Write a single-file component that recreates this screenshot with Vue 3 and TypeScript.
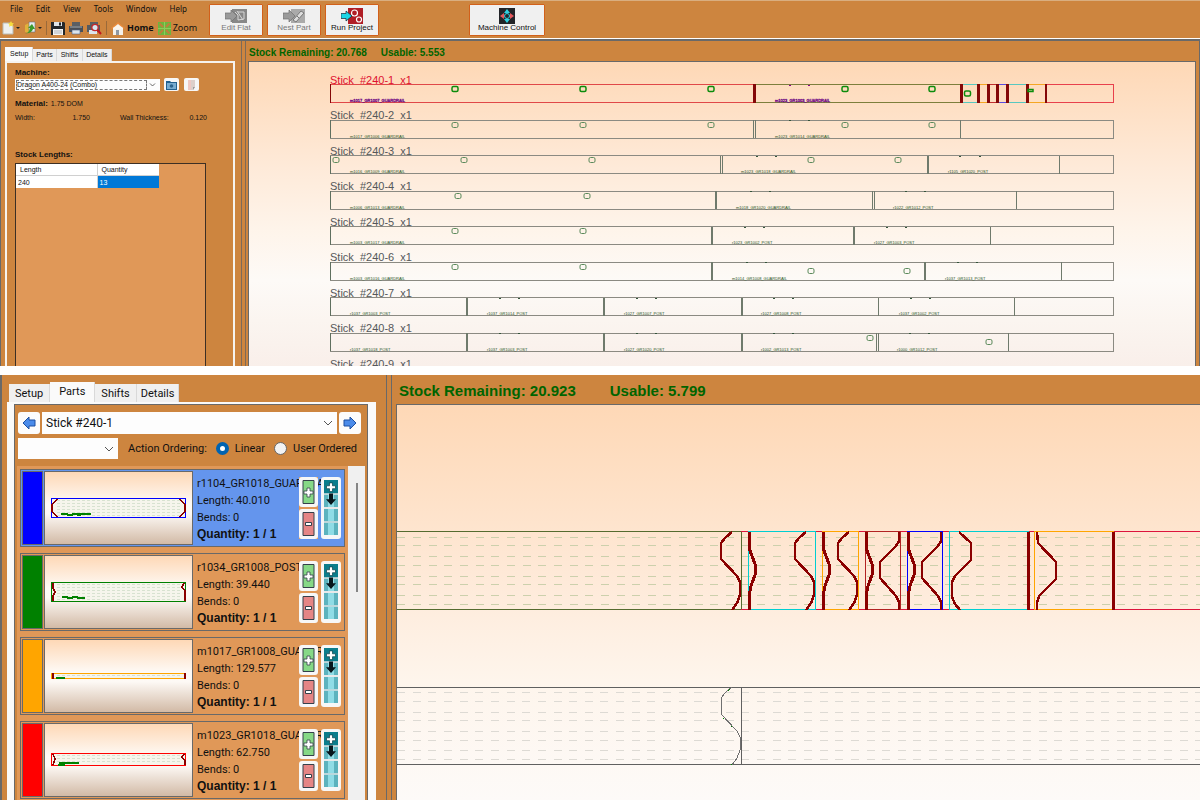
<script setup lang="ts">
import { ref } from 'vue'

interface Row {
  y: number
  seps: number[]
  holes: [number, number][]
  notches: number[]
  labels: [number, string][]
}
interface Part {
  name: string
  length: string
  color: string
  top: number
  height: number
  left: string
  right: string
  mark: string
}

const menus = ['File', 'Edit', 'View', 'Tools', 'Window', 'Help']
const tabs = ['Setup', 'Parts', 'Shifts', 'Details']
const ordering = ref('linear')

const rows: Row[] = [
  { y: 84.5, seps: [], holes: [[455, 89], [583, 89], [711, 89], [845, 89], [932, 89], [967.5, 93.5]], notches: [790, 809], labels: [[350, 'm1017_GR1007_GUARDRAIL'], [775, 'm1023_GR1003_GUARDRAIL']] },
  { y: 120, seps: [753.5, 755, 960.5], holes: [[455, 125], [583, 125], [711, 125], [845, 125], [932, 125]], notches: [790, 809], labels: [[350, 'm1017_GR1006_GUARDRAIL'], [775, 'm1023_GR1014_GUARDRAIL']] },
  { y: 155.5, seps: [720.8, 722, 927.5, 928.5, 1059.5], holes: [[336, 160], [464, 160], [592, 160], [811, 160], [898, 160]], notches: [757, 776, 960, 980], labels: [[350, 'm1016_GR1009_GUARDRAIL'], [741, 'm1023_GR1018_GUARDRAIL'], [948, 'r1105_GR1020_POST']] },
  { y: 191, seps: [715, 716.5, 872.5, 874.5, 1016.5], holes: [[458, 196], [587, 196]], notches: [751, 770, 906, 925], labels: [[350, 'm1006_GR1013_GUARDRAIL'], [736, 'm1018_GR1020_GUARDRAIL'], [893, 'r1022_GR1012_POST']] },
  { y: 226.5, seps: [711, 712, 853, 854.5, 990.5], holes: [[455, 231], [583, 231]], notches: [745, 764, 887, 906], labels: [[350, 'm1003_GR1017_GUARDRAIL'], [732, 'r1023_GR1002_POST'], [874, 'r1027_GR1003_POST']] },
  { y: 262, seps: [711, 712, 924, 925, 1061.5], holes: [[455, 267], [583, 267], [811, 271], [907, 271]], notches: [747, 766, 958, 977], labels: [[350, 'm1003_GR1016_GUARDRAIL'], [732, 'm1014_GR1008_GUARDRAIL'], [945, 'r1037_GR1013_POST']] },
  { y: 297.5, seps: [466.2, 467.5, 603.5, 604.5, 741, 742.5, 878.5, 1014.5], holes: [], notches: [500, 519, 637, 656, 774, 793, 911, 930], labels: [[350, 'r1037_GR1003_POST'], [487, 'r1037_GR1014_POST'], [624, 'r1027_GR1007_POST'], [761, 'r1027_GR1008_POST'], [899, 'r1037_GR1002_POST']] },
  { y: 333, seps: [466.2, 467.5, 603.5, 604.5, 741, 742.5, 876.2, 878.2, 1008.5], holes: [[870, 338], [989, 342]], notches: [500, 519, 637, 656, 774, 793, 910, 929], labels: [[350, 'r1037_GR1018_POST'], [487, 'r1037_GR1003_POST'], [624, 'r1027_GR1020_POST'], [761, 'r1002_GR1013_POST'], [897, 'r1000_GR1012_POST']] },
]

const firstSegs: [number, number, string][] = [
  [330, 754, '#e04848'], [756, 961, '#7d7f3c'], [961, 978, '#58c8c0'], [978, 988, '#f5a623'], [988, 998, '#c03030'],
  [998, 1008, '#5a4be0'], [1008, 1027, '#58c8c0'], [1027, 1046, '#f5a623'], [1046, 1114, '#e8404c'],
]
const firstCuts: [number, number][] = [[330.5, 1], [754.5, 3], [961.5, 3], [978.5, 3], [988.5, 3], [997.5, 3], [1007.5, 3], [1027.5, 3], [1046, 2]]

const zoomSegs: [number, number, string][] = [
  [397, 741, '#556b2f'], [741, 748, '#dc143c'], [748, 816, '#00ced1'], [816, 822, '#dc143c'], [822, 859, '#ffa500'], [859, 865, '#dc143c'],
  [865, 901, '#b22222'], [901, 907, '#dc143c'], [907, 943, '#0000ff'], [943, 949, '#dc143c'], [949, 1029, '#00ced1'],
  [1029, 1034, '#dc143c'], [1034, 1114, '#ffa500'], [1114, 1200, '#dc143c'],
]
const zoomSeps: [number, string][] = [
  [741.5, '#556b2f'], [748.5, '#00ced1'], [815.5, '#00ced1'], [822.5, '#ffa500'], [858.5, '#ffa500'], [865.5, '#b22222'],
  [900.5, '#b22222'], [907.5, '#0000ff'], [942.5, '#0000ff'], [949.5, '#00ced1'], [1034.5, '#ffa500'],
]
const sCurve = 'M732 532L725 538L721 543V559L737 576L740 582V595L737 603L732 610'
const bulge = 'M749 532V548L752 556L755 564V575L751 586L749 596V610'
const notch = 'M899 532V541L896 546L880 562V578L896 596L899 602V610'
const sShifts = [0, 74, 117]
const bulgeShifts = [0, 74, 117, 159]
const notchShifts = [0, 42]
const dashes1 = [537.5, 545.5, 556.5, 565.5, 576.5, 584.5, 595.5, 604.5]
const dashes2 = [692.5, 701.5, 712.5, 720.5, 731.5, 740.5, 750.5, 759.5]

const parts: Part[] = [
  { name: 'r1104_GR1018_GUARDRAIL', length: '40.010', color: '#0000ff', top: 26, height: 19, left: 'M12 27L7 33V39L12 45', right: 'M135 27L140 33V39L135 45', mark: 'M16 42h6l1 1h4l1-1h4l1 1h3M32 42h14' },
  { name: 'r1034_GR1008_POST', length: '39.440', color: '#008000', top: 26, height: 19, left: 'M8 27V32L10 36L8 40V45', right: 'M139 27L137 31L140 35V45', mark: 'M17 41h5l1 1h4l1-1h4l1 1h7' },
  { name: 'm1017_GR1008_GUARDRAIL', length: '129.577', color: '#ffa500', top: 33, height: 5, left: 'M8 33V39', right: 'M140 33V39', mark: 'M11 38h9' },
  { name: 'm1023_GR1018_GUARDRAIL', length: '62.750', color: '#ff0000', top: 29, height: 12, left: 'M8 30L10 35L8 41', right: 'M139 30L137 33L140 37V41', mark: 'M14 39h20M13 41h7' },
]
const selected = ref(0)
</script>

<template>
  <main class="app">
    <section class="window upper">
      <header class="bar">
        <div class="menus">
          <nav class="menu">
            <button v-for="m in menus" :key="m" type="button">{{ m }}</button>
          </nav>
          <div class="tools">
            <button type="button" class="new" aria-label="New">
              <svg width="18" height="14" viewBox="0 0 18 14"><path d="M1 2h8l2 3v8H1z" fill="#eef0f0" stroke="#b9bcb8" /><path d="M9 0l1 2 2 .5-1.500 1.300.5 2-2-1-2 1 .5-2L6 2.500 8 2z" fill="#f7dc3c" /><path d="M14 6h4l-2 2z" fill="#222" /></svg>
            </button>
            <button type="button" aria-label="Open">
              <svg width="18" height="14" viewBox="0 0 18 14"><path d="M1 4l4-2v10l-4-1z" fill="#e0b13a" /><path d="M5 1h6v10H5z" fill="#e8edf0" stroke="#687078" stroke-width=".6" /><path d="M1 12c4 0 4-2 5-5l-2 0 4-4 3 5H9c-1 3-4 5-8 4z" fill="#3c9a2c" /><path d="M14 6h4l-2 2z" fill="#222" /></svg>
            </button>
            <i class="rule"></i>
            <button type="button" aria-label="Save">
              <svg width="14" height="14" viewBox="0 0 14 14"><path d="M0 1h13l1 1v12H0z" fill="#23272b" /><path d="M3 1h8v4H3z" fill="#dfe4e8" /><path d="M8 1.500h2v3H8z" fill="#23272b" /><path d="M2 8h10v6H2z" fill="#f4f6f7" /><path d="M3 10h8M3 12h8" stroke="#8f979d" stroke-width=".7" /></svg>
            </button>
            <button type="button" aria-label="Print">
              <svg width="14" height="14" viewBox="0 0 14 14"><path d="M3 1h8v4H3z" fill="#5a5f64" /><path d="M0 5h14v6H0z" fill="#4a4f55" /><path d="M1 5h12v2H1z" fill="#777e85" /><path d="M3 9h8v4H3z" fill="#dbe4ec" stroke="#47608a" stroke-width=".6" /></svg>
            </button>
            <button type="button" aria-label="Print preview">
              <svg width="15" height="14" viewBox="0 0 15 14"><path d="M3 1h8v4H3z" fill="#5a5f64" /><path d="M0 4h13v7H0z" fill="#555a60" /><path d="M2 9h8v4H2z" fill="#dbe4ec" /><circle cx="8" cy="6.500" r="3.200" fill="#d8e6f0" stroke="#c3282c" stroke-width="1.300" /><path d="M10.500 9l3.500 4" stroke="#c3181c" stroke-width="2" /></svg>
            </button>
            <i class="rule"></i>
            <button type="button" class="home">
              <svg width="14" height="14" viewBox="0 0 14 14"><path d="M2 6h10v8H2z" fill="#f5f1ea" /><path d="M7 1l7 6-1 1-6-5-6 5-1-1z" fill="#e88a3a" /><path d="M7 3l5 4v1H2V7z" fill="#faf5ec" /><path d="M5 9h3v5H5z" fill="#8f98a3" /></svg>
              Home
            </button>
            <button type="button" class="zoom">
              <svg width="13" height="13" viewBox="0 0 13 13"><path d="M0 0h13v13H0z" fill="#6cb63e" /><path d="M1.500 1.500L5 5M11.500 1.500L8 5M1.500 11.500L5 8M11.500 11.500L8 8" stroke="#c07f3c" stroke-width="2" /><path d="M6.500 0v13M0 6.500h13" stroke="#8ccb5c" stroke-width="1" /></svg>
              Zoom
            </button>
          </div>
        </div>
        <div class="actions">
          <button type="button" class="action" disabled>
            <svg width="22" height="16" viewBox="0 0 22 16"><path d="M7 1h15v14H7z" fill="#888" /><path d="M10 4l3 3v5M12 3l6 9M19 4v7l-6 1M13 4h6" stroke="#d8d8d8" fill="none" /><path d="M0 5h6V2l6 6-6 6v-3H0z" fill="#9a9a9a" stroke="#707070" stroke-width=".7" /></svg>
            <span>Edit Flat</span>
          </button>
          <button type="button" class="action" disabled>
            <svg width="22" height="16" viewBox="0 0 22 16"><path d="M8 1h14v14H8z" fill="#aaa" /><path d="M10 12L18 3l3 2-8 9z" fill="#ddd" stroke="#777" /><path d="M14 8l2 2" stroke="#777" /><path d="M0 5h6V2l6 6-6 6v-3H0z" fill="#9a9a9a" stroke="#707070" stroke-width=".7" /></svg>
            <span>Nest Part</span>
          </button>
          <button type="button" class="action">
            <svg width="22" height="16" viewBox="0 0 22 16"><path d="M7 0h15v16H7z" fill="#b01e26" /><circle cx="13.500" cy="5" r="3" fill="none" stroke="#fff" stroke-width="1.200" /><circle cx="18" cy="11.500" r="2.500" fill="none" stroke="#fff" stroke-width="1.200" /><path d="M0 5.500h5V3l6 5-6 5v-2.500H0z" fill="#19d5e5" stroke="#123" stroke-width=".7" /></svg>
            <span>Run Project</span>
          </button>
          <button type="button" class="action control">
            <svg width="16" height="16" viewBox="0 0 16 16"><path d="M0 0h16v16H0z" fill="#222428" /><path d="M8 1l3 4H5zM8 15l3-4H5z" fill="#2fd0df" /><path d="M1 8l4-3v6zM15 8l-4-3v6z" fill="#e4585c" /><circle cx="8" cy="8" r="2.500" fill="#222428" stroke="#2fd0df" /></svg>
            <span>Machine Control</span>
          </button>
        </div>
      </header>
      <div class="body">
        <aside class="side">
          <div class="tabs" role="tablist">
            <button v-for="(t, i) in tabs" :key="t" type="button" role="tab" :aria-selected="i === 0" :class="{ on: i === 0 }">{{ t }}</button>
          </div>
          <div class="sheet">
            <label class="strong" for="machine">Machine:</label>
            <div class="pick">
              <div class="combo">
                <select id="machine"><option>Dragon A400-24 (Combo)</option></select>
                <svg width="7" height="5" viewBox="0 0 7 5"><path d="M1 1l2.500 2.500L6 1" fill="none" stroke="#444" stroke-width=".8" /></svg>
              </div>
              <button type="button" class="mini" aria-label="Open machine"><svg width="11" height="10" viewBox="0 0 11 10"><path d="M0 1h4l1 1h6v8H0z" fill="#24618f" /><path d="M1 3h9v6H1z" fill="#78acd0" /><circle cx="5.500" cy="6" r="1.800" fill="#2d648e" /></svg></button>
              <button type="button" class="mini" aria-label="Machine notes"><svg width="9" height="10" viewBox="0 0 9 10"><path d="M1 0h7v7L6 10H1z" fill="#ddd0cb" /><path d="M1 0h3v10H1z" fill="#efc9c4" /><path d="M8 7H6v3z" fill="#999" /></svg></button>
            </div>
            <p class="material"><b>Material:</b> <span>1.75 DOM</span></p>
            <dl class="dims"><dt>Width:</dt><dd>1.750</dd><dt>Wall Thickness:</dt><dd>0.120</dd></dl>
            <p class="strong stock">Stock Lengths:</p>
            <div class="gridbox">
              <table>
                <thead><tr><th>Length</th><th>Quantity</th></tr></thead>
                <tbody><tr><td>240</td><td class="sel">13</td></tr></tbody>
              </table>
            </div>
          </div>
        </aside>
        <div class="view">
          <p class="status"><span>Stock Remaining: 20.768</span><span>Usable: 5.553</span></p>
          <div class="canvas">
            <svg class="plan" viewBox="249 62 946 304" preserveAspectRatio="xMinYMin slice" shape-rendering="crispEdges">
              <g v-for="(r, i) in rows" :key="r.y" :class="{ hot: i === 0 }">
                <text class="stick" x="330" :y="r.y - 1" shape-rendering="auto">Stick&nbsp; #240-{{ i + 1 }}&nbsp; x1</text>
                <template v-if="i > 0">
                  <rect class="bar-line" x="330.5" :y="r.y" width="783" height="18" />
                  <path class="start" :d="`M330.500 ${r.y}v18`" />
                  <path v-for="s in r.seps" :key="s" class="sep" :d="`M${s} ${r.y}v18`" />
                </template>
                <template v-else>
                  <template v-for="s in firstSegs" :key="s[0]">
                    <path :d="`M${s[0]} 84.500H${s[1]}M${s[0]} 102H${s[1]}`" :stroke="s[2]" fill="none" />
                  </template>
                  <path d="M1113.500 84V102" stroke="#e8404c" />
                  <path v-for="c in firstCuts" :key="c[0]" :d="`M${c[0]} 84V102.500`" stroke="#840808" :stroke-width="c[1]" />
                  <rect class="hole" x="1028" y="89.500" width="5" height="2" shape-rendering="auto" />
                </template>
                <rect v-for="h in r.holes" :key="h[0]" class="hole" :x="h[0] - 3" :y="h[1] - 2.5" width="6" height="5" rx="1.500" shape-rendering="auto" />
                <path v-for="n in r.notches" :key="n" class="nick" :d="`M${n - 1} ${r.y + 0.5}h2`" />
                <text v-for="l in r.labels" :key="l[0]" class="tag" :x="l[0]" :y="r.y + 17.5">{{ l[1] }}</text>
              </g>
              <text class="stick" x="330" y="368">Stick&nbsp; #240-9&nbsp; x1</text>
            </svg>
          </div>
        </div>
      </div>
    </section>

    <section class="window lower">
      <aside class="side">
        <div class="tabs" role="tablist">
          <button v-for="(t, i) in tabs" :key="t" type="button" role="tab" :aria-selected="i === 1" :class="{ on: i === 1 }">{{ t }}</button>
        </div>
        <div class="sheet">
          <div class="inner">
            <div class="nav">
              <button type="button" class="arrow" aria-label="Previous stick"><svg width="14" height="14" viewBox="0 0 14 14"><path d="M1 7l6-6v3h6v6H7v3z" fill="#4a8bea" stroke="#1c4fa0" /></svg></button>
              <div class="combo">
                <select aria-label="Stick"><option>Stick #240-1</option></select>
                <svg width="10" height="6" viewBox="0 0 10 6"><path d="M1 1l4 4 4-4" fill="none" stroke="#555" /></svg>
              </div>
              <button type="button" class="arrow" aria-label="Next stick"><svg width="14" height="14" viewBox="0 0 14 14"><path d="M13 7L7 1v3H1v6h6v3z" fill="#4a8bea" stroke="#1c4fa0" /></svg></button>
            </div>
            <div class="order">
              <div class="combo">
                <select aria-label="Action"><option></option></select>
                <svg width="10" height="6" viewBox="0 0 10 6"><path d="M1 1l4 4 4-4" fill="none" stroke="#555" /></svg>
              </div>
              <span>Action Ordering:</span>
              <label><input v-model="ordering" type="radio" name="ordering" value="linear" />Linear</label>
              <label><input v-model="ordering" type="radio" name="ordering" value="user" />User Ordered</label>
            </div>
            <div class="list">
              <div class="cards">
                <article v-for="(p, i) in parts" :key="p.name" class="card" :class="{ chosen: i === selected }" @click="selected = i">
                  <div class="swatch" :style="{ background: p.color }"></div>
                  <svg class="thumb" viewBox="0 0 147 72" shape-rendering="crispEdges">
                    <rect x="6.500" :y="p.top + 0.5" width="134" :height="p.height" fill="#f6f5ec" :stroke="p.color" />
                    <path v-for="n in Math.floor((p.height - 1) / 3)" :key="n" :d="`M12 ${p.top + n * 3 - 0.5}H136`" stroke="#d8e2d0" stroke-dasharray="3 2" />
                    <path :d="p.left" fill="none" stroke="#8b0000" stroke-width="1.500" />
                    <path :d="p.right" fill="none" stroke="#8b0000" stroke-width="1.500" />
                    <path :d="p.mark" fill="none" stroke="#008000" stroke-width="1.500" />
                  </svg>
                  <div class="facts">
                    <span>{{ p.name }}</span>
                    <span>Length: {{ p.length }}</span>
                    <span>Bends: 0</span>
                    <b>Quantity: 1 / 1</b>
                  </div>
                  <div class="knobs">
                    <div class="pair">
                      <button type="button" aria-label="Add one"><svg width="13" height="24" viewBox="0 0 13 24"><path d="M1 .5h11v23H1z" fill="#86d886" stroke="#35404a" /><path d="M5 8h3v3h3v3H8v3H5v-3H2v-3h3z" fill="#fff" stroke="#35404a" stroke-width=".8" /></svg></button>
                      <button type="button" aria-label="Remove one"><svg width="13" height="24" viewBox="0 0 13 24"><path d="M1 .5h11v23H1z" fill="#e58585" stroke="#35404a" /><path d="M3.500 10.500h6v3h-6z" fill="#fff" stroke="#35404a" /></svg></button>
                    </div>
                    <button type="button" class="fill" aria-label="Fill remaining"><svg width="14" height="56" viewBox="0 0 14 58" preserveAspectRatio="none"><path d="M0 0h14v14H0z" fill="#0b7d8c" /><path d="M0 15h14v13H0zM0 30h14v13H0zM0 44h14v13H0z" fill="#5cb3be" /><path d="M4 15h6v13H4zM4 30h6v13H4zM4 44h6v13H4z" fill="#8fdce6" /><path d="M0 14.500h14M0 29h14M0 43.500h14" stroke="#d4dadc" /><path d="M5.500 3h3v3h3v3h-3v3h-3V9h-3V6h3z" fill="#fff" stroke="#083d48" stroke-width=".7" /><path d="M5 14h4v6h3l-5 6-5-6h3z" fill="#07151b" /></svg></button>
                  </div>
                </article>
              </div>
              <div class="scroll"><i></i></div>
            </div>
          </div>
        </div>
      </aside>
      <div class="view">
        <p class="status"><span>Stock Remaining: 20.923</span><span>Usable: 5.799</span></p>
        <div class="canvas">
          <svg class="plan" viewBox="397 405 803 395" preserveAspectRatio="xMinYMin slice" shape-rendering="crispEdges" fill="none">
            <path v-for="d in dashes1" :key="d" :d="`M397.400 ${d}H1200`" stroke="#ccd0ac" stroke-dasharray="8 7.650" />
            <path v-for="d in dashes2" :key="d" :d="`M397 ${d}H1200`" stroke="#dddad4" stroke-dasharray="8 7.650" />
            <path v-for="s in zoomSegs" :key="s[0]" :d="`M${s[0]} 531.500H${s[1]}M${s[0]} 609.500H${s[1]}`" :stroke="s[2]" />
            <path v-for="s in zoomSeps" :key="s[0]" :d="`M${s[0]} 532V609`" :stroke="s[1]" />
            <g stroke="#8b0000">
              <path v-for="x in sShifts" :key="`s${x}`" :d="sCurve" :transform="`translate(${x} 0)`" stroke-width="2.500" />
              <path v-for="x in bulgeShifts" :key="`b${x}`" :d="bulge" :transform="`translate(${x} 0)`" stroke-width="3" />
              <path v-for="x in notchShifts" :key="`n${x}`" :d="notch" :transform="`translate(${x} 0)`" stroke-width="2.500" />
              <path d="M959 532L971 543V560L955 576L952 582V597L955 604L960 610" stroke-width="2.500" />
              <path d="M1037 532L1038 543L1056 562V579L1039 596L1037 603V610" stroke-width="2.500" />
              <path d="M1028.500 532V610M1113.500 532V610" stroke-width="3" />
            </g>
            <path d="M397 687.500H1200M397 764.500H1200M741.500 688V764" stroke="#606060" />
            <path :d="sCurve" transform="translate(0 155)" stroke="#707070" />
            <path d="M728 691l2-2M723 718h1M731 726l1 1M731 764h1" stroke="#008000" />
          </svg>
        </div>
      </div>
    </section>
  </main>
</template>

<style>
body { margin: 0; background: #fff; }
</style>

<style scoped>
* { box-sizing: border-box; }
.app { display: flex; flex-direction: column; gap: 9px; height: 100vh; overflow: hidden; font-family: "Liberation Sans", Arial, sans-serif; color: #111; }
button, select { font: inherit; color: inherit; border: 0; padding: 0; margin: 0; background: none; }
svg { display: block; }
p, dl, dd { margin: 0; }
.window { background: #cd853f; overflow: hidden; }
.upper { flex: 0 0 366px; display: flex; flex-direction: column; font-size: 7px; }
.lower { flex: 1; min-height: 0; display: flex; }

.bar { display: flex; height: 41px; flex: none; border-top: 1px solid #d9ae80; border-bottom: 2px solid #696969; box-shadow: inset 0 -1px #fff; }
.menus { width: 209px; padding-top: 2px; }
.menu { display: flex; gap: 13px; padding-left: 10px; font: 8px/12px "Noto Sans", sans-serif; }
.tools { display: flex; align-items: center; gap: 4px; padding: 6px 0 0 2px; height: 20px; font: 9px/14px "Noto Sans", sans-serif; }
.tools button { display: flex; align-items: center; gap: 2px; }
.tools .home { font-weight: 700; }
.rule { width: 1px; height: 14px; background: #9a6a3a; }
.actions { display: flex; gap: 4px; padding-top: 3px; font-size: 8px; }
.action { width: 54px; height: 32px; background: #f0f0f0; border: 1px solid #d2601a; border-radius: 1px; display: flex; flex-direction: column; align-items: center; justify-content: flex-start; padding-top: 3px; line-height: 8px; white-space: nowrap; }
.action:disabled { color: #777; }
.control { width: 76px; margin-left: 86px; }

.body { flex: 1; min-height: 0; display: flex; border-left: 1px solid #696969; }
.upper .side { flex: 0 0 241px; padding: 6px 6px 0 4px; border-right: 1px solid #7d6a58; display: flex; flex-direction: column; }
.tabs { display: flex; align-items: flex-end; }
.tabs button { background: #f0f0f0; border-right: 1px solid #d9d9d9; }
.tabs .on { background: #fafafa; }
.upper .tabs button { height: 12px; line-height: 12px; padding: 0 3px; }
.upper .tabs button:nth-child(3) { padding: 0 4px; }
.upper .tabs .on { height: 14px; padding: 0 4px 0 5px; }
.upper .sheet { flex: 1; border: 2px solid #f6f3ef; border-bottom: 0; padding: 5px 0 0 8px; display: flex; flex-direction: column; width: 230px; }
.strong { font-weight: 700; font-size: 8px; line-height: 10px; }
.pick { display: flex; align-items: center; gap: 4px; }
.combo { position: relative; background: #fdfdfd; }
.combo select { width: 100%; height: 100%; appearance: none; cursor: pointer; }
.combo svg { position: absolute; right: 4px; top: 50%; transform: translateY(-50%); pointer-events: none; }
.pick .combo { width: 145px; height: 12px; padding: 1px 13px 1px 1px; }
.pick .combo select { border: 1px dashed #777; line-height: 8px; display: block; }
.mini { width: 15px; height: 13px; background: #f7f7f7; border-radius: 2px; display: flex; align-items: center; justify-content: center; }
.mini + .mini { margin-left: 1px; }
.material { margin-top: 8px; line-height: 10px; }
.material b { font-size: 8px; margin-right: 1px; }
.dims { display: grid; grid-template-columns: 24px 51px 77px 40px; line-height: 10px; margin-top: 4px; }
.dims dt, .dims dd { white-space: nowrap; }
.dims dd { text-align: right; }
.dims dt:nth-of-type(2) { padding-left: 30px; }
.stock { margin-top: 27px; }
.gridbox { flex: 1; margin-top: 3px; width: 191px; background: #e09858; border: 1px solid #3c2f24; border-bottom: 0; }
.gridbox table { border-collapse: collapse; width: 143px; background: #fff; table-layout: fixed; line-height: 11px; }
.gridbox th { font-weight: 400; text-align: left; padding: 0 0 0 4px; border-bottom: 1px solid #d0d0d0; }
.gridbox th, .gridbox td { width: 62px; }
.gridbox th:first-child, .gridbox td:first-child { width: 81px; border-right: 1px solid #d0d0d0; }
.gridbox td { padding: 1px 0 0 2px; }
.gridbox .sel { background: #0078d7; color: #fff; }

.view { flex: 1; min-width: 0; display: flex; flex-direction: column; }
.status { display: flex; color: #006400; font-weight: 700; white-space: nowrap; }
.canvas { flex: 1; min-height: 0; border-top: 1px solid #696969; border-left: 1px solid #696969; }
.plan { width: 100%; height: 100%; }
.upper .view { padding: 0 3px 0 2px; margin-left: 3px; border-left: 1px solid #7d6a58; border-right: 1px solid #696969; }
.upper .status { height: 20px; line-height: 24px; font-size: 10px; gap: 14px; padding-left: 1px; }
.upper .canvas { background: linear-gradient(#fed8b6, #feead9 35%, #fef4ea 55%, #fdfaf7 72%, #fbf5f0 85%, #f9efea); border-right: 1px solid #696969; }

.stick { font-size: 11px; fill: #55585a; }
.tag { font-size: 4px; fill: #1d521d; }
.bar-line { fill: none; stroke: #8b8a82; }
.start { stroke: #5f6f5f; }
.sep { stroke: #6f7a6c; }
.hole { fill: none; stroke: #5c8a5c; }
.nick { stroke: #33543a; }
.hot .stick { fill: #e01030; }
.hot .tag { fill: #6a0080; stroke: #6a0080; stroke-width: 0.3px; }
.hot .hole { stroke: #0c8c0c; stroke-width: 1.5px; }
.hot .nick { stroke: #8b008b; }

.lower .side { flex: 0 0 387px; padding: 7px 10px 0 5px; border-right: 1px solid #696969; border-left: 2px solid #696969; font: 11px/17px Roboto, sans-serif; display: flex; flex-direction: column; }
.lower .tabs { padding-left: 2px; }
.lower .tabs button { height: 18px; line-height: 20px; padding: 0 6px; }
.lower .tabs button:last-child { padding: 0 4px; }
.lower .tabs .on { height: 20px; padding: 0 9px; line-height: 20px; }
.lower .sheet { flex: 1; min-height: 0; background: #fafafa; padding: 2px 8px 0 7px; }
.inner { height: 100%; background: #cd853f; border: 1px solid #696969; border-bottom: 0; padding: 7px 2px 0; display: flex; flex-direction: column; }
.nav { display: flex; gap: 2px; padding: 0 4px 0 1px; }
.arrow { width: 22px; height: 22px; background: #fcfcfc; border-radius: 3px; display: flex; align-items: center; justify-content: center; }
.nav .combo { flex: 1; height: 22px; font-size: 12px; padding-left: 4px; }
.order { display: flex; align-items: center; padding: 4px 0 0 1px; height: 25px; white-space: nowrap; }
.order .combo { width: 100px; height: 21px; margin-right: 10px; }
.order label { display: flex; align-items: center; gap: 6px; margin-left: 9px; }
.order input { appearance: none; width: 13px; height: 13px; margin: 0; border-radius: 50%; border: 1px solid #666; background: #f3f3f3; }
.order input:checked { border: 4px solid #0063b1; background: #fff; }
.list { flex: 1; min-height: 0; display: flex; margin-top: 7px; }
.cards { flex: 1; min-width: 0; background: #e09858; padding: 3px 3px 0; display: flex; flex-direction: column; gap: 6px; overflow: hidden; }
.card { position: relative; flex: none; height: 78px; border: 1px solid #696969; padding: 1px; display: flex; gap: 1px; overflow: hidden; }
.chosen { background: #6495ed; }
.swatch { flex: none; width: 21px; border: 1px solid #696969; }
.thumb { flex: none; width: 149px; height: 74px; border: 1px solid #696969; background: linear-gradient(#fed8b6, #fefaf6 45%, #fdf9f5 58%, #d2baa6); }
.facts { display: flex; flex-direction: column; padding: 4px 0 0 3px; white-space: nowrap; }
.facts b { font: 700 12px/17px "Liberation Sans", Arial, sans-serif; }
.knobs { position: absolute; right: 3px; top: 7px; display: flex; gap: 3px; }
.pair { display: flex; flex-direction: column; gap: 2px; }
.pair, .fill { background: #e09858; }
.knobs button { border: 3px solid #f7f7f7; border-radius: 3px; background: #f7f7f7; }
.scroll { width: 17px; background: #f0f0f0; display: flex; justify-content: center; padding-top: 17px; }
.scroll i { width: 2px; height: 109px; background: #858585; }
.lower .view { padding-left: 4px; margin-left: 4px; border-left: 1px solid #696969; }
.lower .status { height: 29px; line-height: 32px; font-size: 15px; gap: 34px; padding-left: 3px; }
.lower .canvas { background: linear-gradient(#fed8b6, #feead9 45%, #fef5ec 70%, #fdfaf8); }
</style>
